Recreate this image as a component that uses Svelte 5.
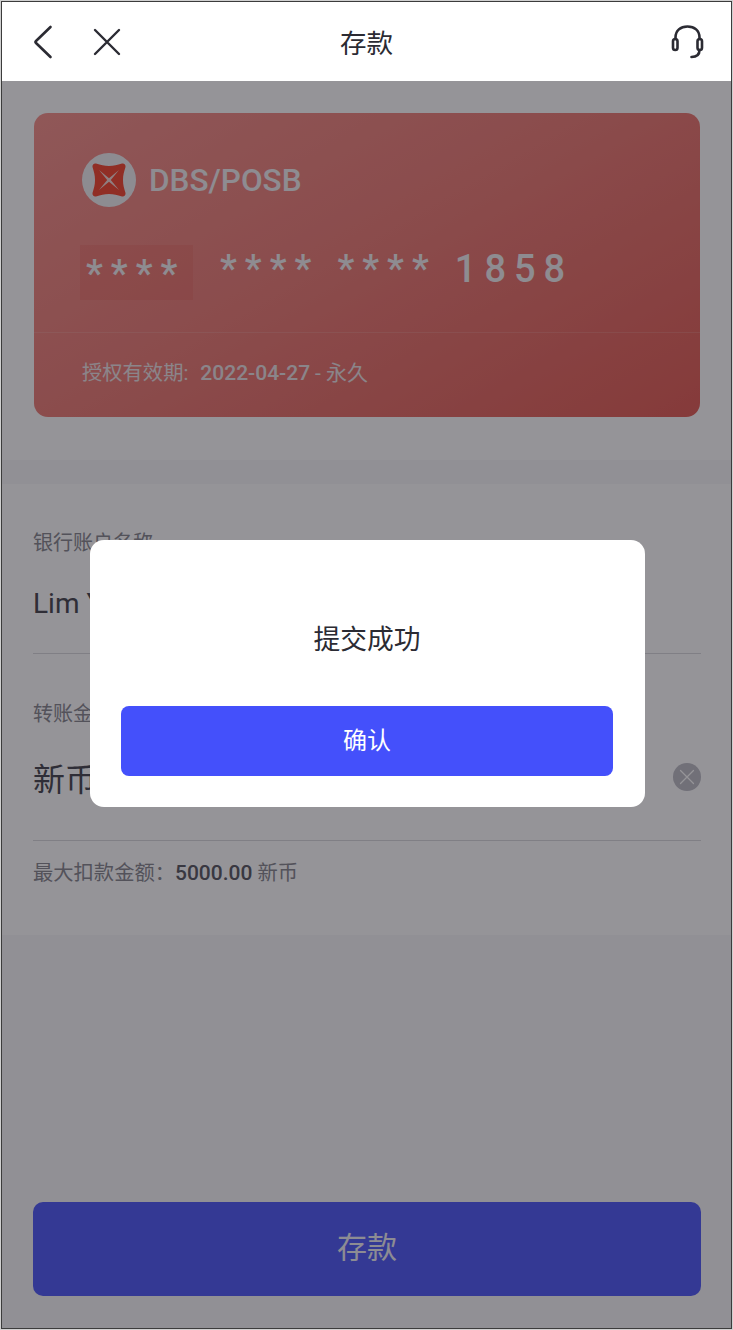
<script>
  const cardGroups = ['****', '****']
</script>

<div class="screen">
  <header class="topbar">
    <div class="nav-left">
      <svg class="back" width="20" height="34" viewBox="0 0 20 34" fill="none">
        <path d="M17.5 2 L3 16 Q2 17 3 18 L17.5 32" stroke="#2b2b33" stroke-width="2.6" stroke-linecap="round" stroke-linejoin="round" />
      </svg>
      <svg class="close" width="28" height="28" viewBox="0 0 28 28" fill="none">
        <path d="M2 2 L26 26 M26 2 L2 26" stroke="#2b2b33" stroke-width="2.4" stroke-linecap="round" />
      </svg>
    </div>
    <h1>存款</h1>
    <svg class="service" width="33" height="34" viewBox="0 0 33 34" fill="none" stroke="#2b2b33" stroke-width="2.6" stroke-linecap="round">
      <path d="M4.5 14 V12.5 C4.5 5.5 9.5 1.5 16.5 1.5 C23.5 1.5 28.5 5.5 28.5 12.5 V14" />
      <rect x="2" y="14" width="4.5" height="11" rx="2.25" />
      <rect x="26.5" y="14" width="4.5" height="11" rx="2.25" />
      <path d="M28.5 25 C28.5 30 26 32 20.5 32" />
    </svg>
  </header>

  <section class="card-area">
    <div class="card">
      <div class="card-main">
        <div class="bank">
          <span class="logo">
            <svg width="38" height="38" viewBox="0 0 38 38">
              <path d="M6 2.5 C11 4 14 5 19 5 C24 5 27 4 32 2.5 C34 2 36 4 35.5 6 C34 11 33 14 33 19 C33 24 34 27 35.5 32 C36 34 34 36 32 35.5 C27 34 24 33 19 33 C14 33 11 34 6 35.5 C4 36 2 34 2.5 32 C4 27 5 24 5 19 C5 14 4 11 2.5 6 C2 4 4 2 6 2.5 Z" fill="#f5432c" />
              <path d="M9 9 L19 17.2 L29 9 L20.8 19 L29 29 L19 20.8 L9 29 L17.2 19 Z" fill="#f4d9d4" />
            </svg>
          </span>
          <span class="bank-name">DBS/POSB</span>
        </div>
        <div class="number">
          <span class="first">****</span>
          {#each cardGroups as group}
            <span>{group}</span>
          {/each}
          <span>1858</span>
        </div>
      </div>
      <div class="card-foot">
        授权有效期:<b>2022-04-27</b><span class="term">- 永久</span>
      </div>
    </div>
  </section>

  <section class="form">
    <div class="label">银行账户名称</div>
    <div class="value name">Lim Yong Wei</div>
    <div class="label second">转账金额</div>
    <div class="amount">
      <span class="value currency">新币</span>
      <span class="clear">
        <svg width="16" height="16" viewBox="0 0 16 16" fill="none">
          <path d="M1.5 1.5 L14.5 14.5 M14.5 1.5 L1.5 14.5" stroke="#fff" stroke-width="1.3" stroke-linecap="round" />
        </svg>
      </span>
    </div>
    <div class="limit">最大扣款金额：<b>5000.00</b> 新币</div>
  </section>

  <div class="bottom">
    <button class="submit" type="button">存款</button>
  </div>

  <div class="overlay"></div>

  <div class="modal">
    <p>提交成功</p>
    <button type="button">确认</button>
  </div>
</div>

<style>
  :global(body) {
    margin: 0;
    background: #d0d0d0;
  }

  .screen {
    position: relative;
    box-sizing: border-box;
    height: 1328px;
    margin: 1px 1px 0;
    border: 1px solid #3c3c3c;
    background: #f7f7f9;
    display: flex;
    flex-direction: column;
    overflow: hidden;
    font-family: Roboto, "Noto Sans CJK SC", sans-serif;
    color: #2b2b33;
  }

  .topbar {
    position: relative;
    z-index: 2;
    height: 79px;
    flex: none;
    background: #fff;
    display: flex;
    align-items: center;
    justify-content: space-between;
    padding: 0 27px 0 31px;
  }

  .nav-left {
    display: flex;
    align-items: center;
    gap: 40px;
  }

  h1 {
    position: absolute;
    left: 0;
    right: 0;
    margin: 0;
    text-align: center;
    font-size: 26.5px;
    font-weight: 400;
  }

  .card-area {
    height: 379px;
    flex: none;
    box-sizing: border-box;
    background: #fff;
    padding: 32px 31px 0 32px;
  }

  .card {
    height: 304px;
    border-radius: 14px;
    background: linear-gradient(150deg, #f58f89 0%, #ec7b74 45%, #e25a52 100%);
    color: #f2f0f2;
    display: flex;
    flex-direction: column;
  }

  .card-main {
    height: 220px;
    flex: none;
    box-sizing: border-box;
    padding: 40px 48px 0;
    border-bottom: 1px solid rgba(255, 255, 255, 0.13);
  }

  .bank {
    display: flex;
    align-items: center;
    gap: 13px;
  }

  .logo {
    width: 54px;
    height: 54px;
    border-radius: 50%;
    background: #f1f1f3;
    display: flex;
    align-items: center;
    justify-content: center;
  }

  .bank-name {
    font-size: 31.5px;
    font-weight: 500;
  }

  .number {
    display: flex;
    gap: 18px;
    margin: 38px 0 0 -2px;
    font-size: 38px;
    font-weight: 500;
    letter-spacing: 8px;
    line-height: 48px;
    height: 55px;
    white-space: nowrap;
  }

  .number .first {
    box-sizing: border-box;
    width: 113px;
    height: 55px;
    padding: 5px 0 0 6px;
    margin-right: 9px;
    background: rgba(220, 60, 50, 0.14);
  }

  .card-foot {
    padding: 26px 48px 0;
    font-size: 20.3px;
    line-height: 28px;
    color: #eceaec;
    opacity: 0.95;
  }

  .card-foot b,
  .card-foot .term {
    font-size: 21px;
  }

  .card-foot b {
    font-weight: 500;
    margin-left: 12px;
  }

  .card-foot .term {
    margin-left: 5px;
  }

  .form {
    margin-top: 24px;
    height: 451px;
    flex: none;
    box-sizing: border-box;
    background: #fff;
    padding: 44px 30px 0 31px;
  }

  .label {
    font-size: 20px;
    line-height: 30px;
    color: #85858d;
  }

  .label.second {
    margin-top: 45px;
  }

  .value {
    color: #44444c;
  }

  .name {
    height: 96px;
    box-sizing: border-box;
    padding-top: 24px;
    font-size: 28px;
    line-height: 44px;
    border-bottom: 1px solid #d8d8dc;
  }

  .amount {
    display: flex;
    align-items: center;
    justify-content: space-between;
    height: 112px;
    box-sizing: border-box;
    padding-bottom: 16px;
    border-bottom: 1px solid #d8d8dc;
  }

  .currency {
    font-size: 32px;
  }

  .clear {
    width: 28px;
    height: 28px;
    border-radius: 50%;
    background: #bcbcc4;
    display: flex;
    align-items: center;
    justify-content: center;
  }

  .limit {
    margin-top: 17px;
    font-size: 20.3px;
    line-height: 30px;
    color: #85858d;
  }

  .limit b {
    font-size: 21px;
    font-weight: 500;
    color: #55555e;
  }

  .bottom {
    flex: 1;
    display: flex;
    align-items: flex-end;
    padding: 0 30px 32px 31px;
  }

  .submit {
    width: 100%;
    height: 94px;
    padding: 0 0 8px;
    border: 0;
    border-radius: 10px;
    background: #4c57f8;
    color: #f0f0f5;
    font: inherit;
    font-size: 30px;
  }

  .overlay {
    position: absolute;
    left: 0;
    right: 0;
    top: 79px;
    bottom: 0;
    background: rgba(24, 22, 30, 0.46);
  }

  .modal {
    position: absolute;
    z-index: 3;
    left: 88px;
    top: 538px;
    width: 555px;
    height: 267px;
    box-sizing: border-box;
    background: #fff;
    border-radius: 14px;
    padding: 0 32px 0 31px;
    text-align: center;
  }

  .modal p {
    margin: 0;
    padding-top: 80px;
    height: 166px;
    box-sizing: border-box;
    font-size: 26.75px;
    line-height: 40px;
    color: #2b2b33;
  }

  .modal button {
    width: 100%;
    height: 70px;
    padding: 0 0 6px;
    border: 0;
    border-radius: 8px;
    background: #4450fb;
    color: #fff;
    font: inherit;
    font-size: 24px;
  }
</style>
